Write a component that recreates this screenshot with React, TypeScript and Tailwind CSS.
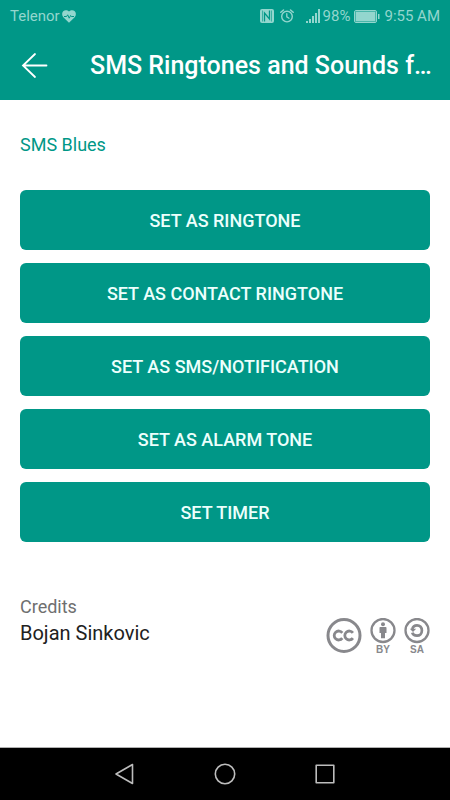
type ToneAction = {
    id: string;
    label: string;
};

const actions: ToneAction[] = [
    { id: "ringtone", label: "SET AS RINGTONE" },
    { id: "contact", label: "SET AS CONTACT RINGTONE" },
    { id: "sms", label: "SET AS SMS/NOTIFICATION" },
    { id: "alarm", label: "SET AS ALARM TONE" },
    { id: "timer", label: "SET TIMER" },
];

function HeartRateIcon() {
    return (
        <svg width="14" height="13" viewBox="0 0 14 13" aria-hidden="true">
            <path
                d="M7 12.8 1.3 7.2C-.3 5.2-.2 2.6 1.2 1.2 2.8-.3 5.500 0 7 1.500 8.500 0 11.200-.3 12.800 1.200 14.200 2.600 14.300 5.200 12.700 7.200Z"
                fill="currentColor"
            />
            <path d="M2 6.500H4.600L5.700 4.800 7.200 8.200 8.600 5.500 9.400 6.500H12" fill="none" stroke="#009787" strokeWidth="1" />
        </svg>
    );
}

function NfcIcon() {
    return (
        <svg width="14" height="14" viewBox="0 0 14 14" aria-hidden="true">
            <rect width="14" height="14" rx="2" fill="currentColor" />
            <path d="M4.500 12.500V4L9.500 10V1.500" fill="none" stroke="#009787" strokeWidth="1.300" />
            <path d="M2.500 1.500V12.500M11.500 1.500V12.500" fill="none" stroke="#009787" strokeWidth=".6" />
        </svg>
    );
}

function AlarmIcon() {
    return (
        <svg width="14" height="14" viewBox="0 0 14 14" fill="none" stroke="currentColor" strokeLinecap="round" aria-hidden="true">
            <circle cx="7" cy="7.600" r="5.300" strokeWidth="1.400" />
            <path d="M.8 3.300 3.500 1M13.200 3.300 10.500 1" strokeWidth="1.500" />
            <path d="M6.800 4.700V7.800L9 9.200" strokeWidth="1.300" />
        </svg>
    );
}

function SignalIcon() {
    return (
        <svg width="15" height="14" viewBox="0 0 15 14" fill="currentColor" aria-hidden="true">
            <rect x="0" y="12" width="2" height="2" />
            <rect x="3" y="10" width="2" height="4" />
            <rect x="6" y="7" width="2" height="7" />
            <rect x="9" y="4" width="2" height="10" />
            <rect x="12" y="0" width="2" height="14" />
        </svg>
    );
}

function BatteryIcon() {
    return (
        <svg width="26" height="13" viewBox="0 0 26 13" aria-hidden="true">
            <rect x=".5" y=".5" width="22" height="12" rx="1.500" fill="none" stroke="currentColor" />
            <rect x="1.500" y="1.500" width="20" height="10" fill="currentColor" />
            <rect x="24" y="4" width="1.500" height="5" fill="currentColor" />
        </svg>
    );
}

function StatusBar() {
    return (
        <div className="flex h-8 items-center justify-between px-[10px] text-[15px] text-[#93d6ce]">
            <div className="flex items-center gap-[2px]">
                <span>Telenor</span>
                <HeartRateIcon />
            </div>
            <div className="flex items-center">
                <div className="mr-3 flex gap-[6px]">
                    <NfcIcon />
                    <AlarmIcon />
                </div>
                <SignalIcon />
                <span className="ml-[2px] mr-1">98%</span>
                <BatteryIcon />
                <span className="ml-1">9:55 AM</span>
            </div>
        </div>
    );
}

function LicenseBadges() {
    return (
        <div className="mt-6 flex items-start gap-2 text-[#88888c]">
            <svg width="36" height="36" viewBox="0 0 36 36" fill="none" stroke="currentColor" role="img" aria-label="Creative Commons">
                <circle cx="18" cy="17.500" r="16" strokeWidth="3" />
                <path d="M16.300 14.800A4.500 4.500 0 1 0 16.300 20.200M26.900 14.800A4.500 4.500 0 1 0 26.900 20.200" strokeWidth="2.800" />
            </svg>
            <div className="flex flex-col items-center">
                <svg width="26" height="26" viewBox="0 0 26 26" aria-hidden="true">
                    <circle cx="13" cy="12.500" r="11.500" fill="none" stroke="currentColor" strokeWidth="2.300" />
                    <circle cx="13" cy="6.200" r="2" fill="currentColor" />
                    <path d="M10.300 9H15.700Q16.500 9 16.500 9.800V15H15V20.200H11V15H9.500V9.800Q9.500 9 10.300 9Z" fill="currentColor" />
                </svg>
                <span className="font-['Liberation_Sans'] text-[10px] leading-3 font-bold">BY</span>
            </div>
            <div className="flex flex-col items-center">
                <svg width="26" height="26" viewBox="0 0 26 26" fill="none" stroke="currentColor" aria-hidden="true">
                    <circle cx="13" cy="12.500" r="11.500" strokeWidth="2.300" />
                    <path d="M8.300 11C8.800 8.700 10.700 7.300 13 7.300 16 7.300 17.900 9.500 17.900 12.500S15.900 17.700 13 17.700C10.700 17.700 8.800 16.500 8.300 14.600" strokeWidth="2.700" />
                    <path d="M5.800 10.800H12.200L9 14Z" fill="currentColor" stroke="none" />
                </svg>
                <span className="font-['Liberation_Sans'] text-[10px] leading-3 font-bold">SA</span>
            </div>
        </div>
    );
}

function NavigationBar() {
    return (
        <nav className="mt-auto flex h-[53px] items-center justify-center gap-[76px] border-t border-[#b0b0b0] bg-black text-[#bdbdbd]">
            <button type="button" aria-label="Back">
                <svg width="24" height="24" viewBox="0 0 24 24" fill="none" stroke="currentColor" strokeWidth="1.600" strokeLinejoin="round">
                    <path d="M19.500 2.500V21.500L3 12Z" />
                </svg>
            </button>
            <button type="button" aria-label="Home">
                <svg width="24" height="24" viewBox="0 0 24 24" fill="none" stroke="currentColor" strokeWidth="1.600">
                    <circle cx="12" cy="12" r="9.700" />
                </svg>
            </button>
            <button type="button" aria-label="Recent apps">
                <svg width="24" height="24" viewBox="0 0 24 24" fill="none" stroke="currentColor" strokeWidth="1.600" strokeLinejoin="round">
                    <rect x="3.200" y="3.200" width="17.600" height="17.600" />
                </svg>
            </button>
        </nav>
    );
}

export default function App() {
    return (
        <div className="flex min-h-screen flex-col bg-white font-[Roboto,sans-serif]">
            <header className="bg-[#009787]">
                <StatusBar />
                <div className="flex h-[68px] items-center gap-[42px] px-5">
                    <button type="button" aria-label="Go back" className="shrink-0 text-white">
                        <svg width="28" height="28" viewBox="0 0 28 28" fill="none" stroke="currentColor" strokeWidth="1.800" strokeLinecap="round">
                            <path d="M15 2 3 13.500 15 25M3.500 13.500H26.500" />
                        </svg>
                    </button>
                    <h1 className="whitespace-nowrap text-[25px] font-medium text-white">SMS Ringtones and Sounds f…</h1>
                </div>
            </header>
            <main className="px-5 pt-8">
                <h2 className="text-[18px] leading-[26px] text-[#009787]">SMS Blues</h2>
                <div className="mt-8 flex flex-col gap-[13px]">
                    {actions.map((action) => (
                        <button
                            key={action.id}
                            type="button"
                            className="h-[60px] rounded-md bg-[#009787] text-[18px] font-medium text-[#ecfffc]"
                        >
                            {action.label}
                        </button>
                    ))}
                </div>
                <section className="mt-[52px] flex items-start justify-between">
                    <div>
                        <p className="text-[18px] leading-[26px] text-[#6f6f6f]">Credits</p>
                        <p className="text-[20px] leading-[26px] text-[#212121]">Bojan Sinkovic</p>
                    </div>
                    <LicenseBadges />
                </section>
            </main>
            <NavigationBar />
        </div>
    );
}
